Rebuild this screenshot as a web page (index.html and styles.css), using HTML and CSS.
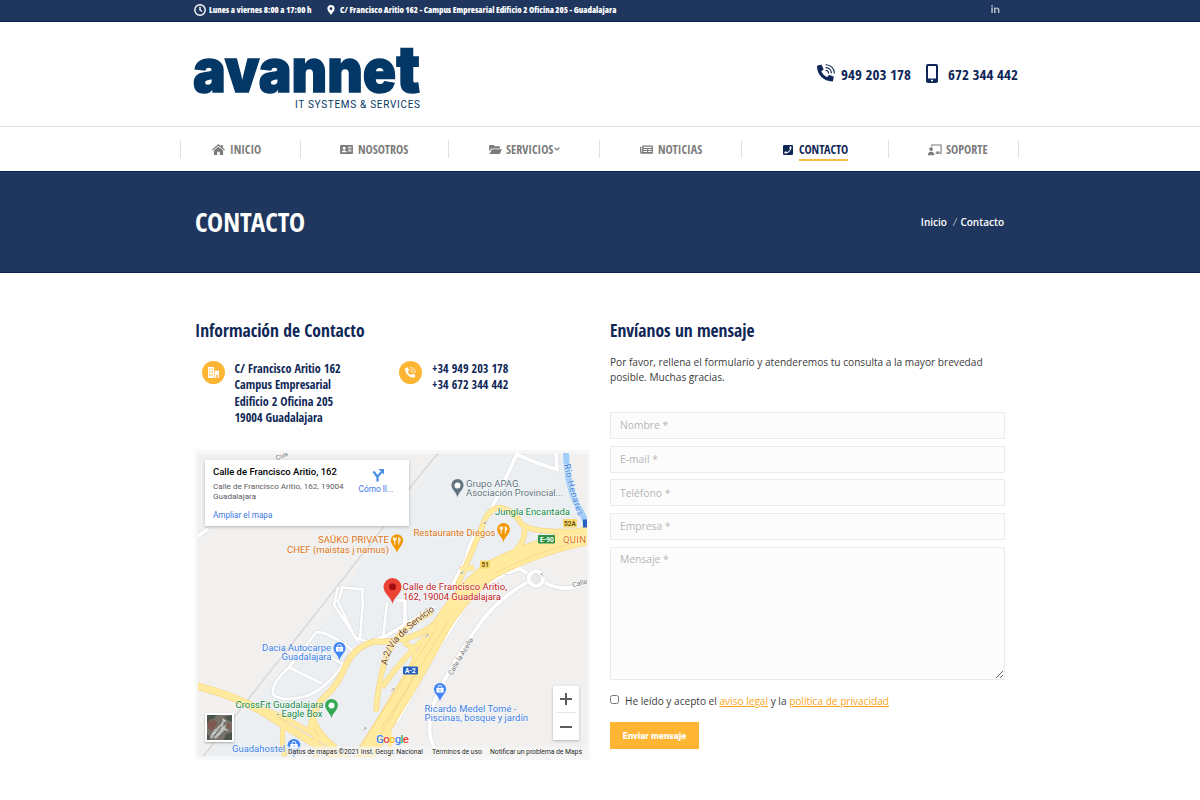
FILE: index.html
```html
<!DOCTYPE html>
<html lang="es">
<head>
<meta charset="utf-8">
<title>Contacto - Avannet</title>
<link rel="stylesheet" href="styles.css">
</head>
<body>
<svg class="defs" width="0" height="0">
  <symbol id="call" viewBox="0 0 512 512">
    <path transform="translate(0 22) scale(.93)" d="M497.39 361.8l-112-48a24 24 0 0 0-28 6.9l-49.6 60.6A370.66 370.66 0 0 1 130.6 204.11l60.6-49.6a23.94 23.94 0 0 0 6.9-28l-48-112A24.16 24.16 0 0 0 122.6.61l-104 24A24 24 0 0 0 0 48c0 256.5 207.9 464 464 464a24 24 0 0 0 23.400-18.600l24-104a24.290 24.290 0 0 0-14.010-27.600z"/>
    <path fill="none" stroke="currentColor" stroke-width="32" stroke-linecap="round" d="M256 20c130 0 236 106 236 236M256 104c84 0 152 68 152 152M256 186c39 0 70 31 70 70"/>
  </symbol>
  <symbol id="pin" viewBox="0 0 16 22"><path d="M8 22C7 16 1 13 1 7.500a7 7 0 0 1 14 0C15 13 9 16 8 22z"/></symbol>
  <symbol id="bag" viewBox="0 0 10 10"><path d="M1 4h8v5H1z" fill="#fff"/><path d="M3 4V3a2 2 0 0 1 4 0v1" fill="none" stroke="#fff"/><path d="M3.500 6q1.500 1.500 3 0" fill="none" stroke="#4285f4" stroke-width=".8"/></symbol>
  <symbol id="fork" viewBox="0 0 10 10"><path d="M2.500 1v8M1 1v3h3V1M7 9V1q2 1 1.500 4H7" fill="none" stroke="#fff" stroke-width="1.100"/></symbol>
</svg>

<div class="topbar">
  <svg class="i-clock" viewBox="0 0 12 12"><circle cx="6" cy="6" r="5.200"/><path d="M6 2.800V6l2.200 1.500"/></svg>
  <span class="hours">Lunes a viernes 8:00 a 17:00 h</span>
  <svg class="i-marker" viewBox="0 0 8 11"><path fill-rule="evenodd" d="M4 11C3 8.500 0 6.500 0 4a4 4 0 0 1 8 0c0 2.500-3 4.500-4 7zM4 2.500a1.500 1.500 0 1 0 0 3 1.500 1.500 0 0 0 0-3z"/></svg>
  <span class="address">C/ Francisco Aritio 162 - Campus Empresarial Edificio 2 Oficina 205 - Guadalajara</span>
  <svg class="i-linkedin" viewBox="0 0 9 8"><path d="M.3 2.600h1.500V8H.3zM.2.300h1.700v1.400H.2zM3 2.600h1.400v.7c.8-1.300 4-1.300 4 1.400V8H6.900V5c0-1.600-2.400-1.500-2.400 0v3H3z"/></svg>
</div>

<header class="header">
  <svg class="logo" viewBox="0 0 228 66" role="img">
    <text class="logo-name" x="-1" y="48" textLength="227" lengthAdjust="spacingAndGlyphs">avanne<tspan class="logo-t">t</tspan></text>
    <text class="logo-tag" x="101" y="64.300" textLength="125">IT SYSTEMS &amp; SERVICES</text>
  </svg>
  <div class="phones cond">
    <svg class="i-call"><use href="#call"/></svg><span class="tel-a">949 203 178</span>
    <svg class="i-mobile" viewBox="0 0 12 19"><path fill-rule="evenodd" d="M2 0h8a2 2 0 0 1 2 2v15a2 2 0 0 1-2 2H2a2 2 0 0 1-2-2V2a2 2 0 0 1 2-2zm0 2v12.500h8V2zm3 13.700v1.600h2v-1.600z"/></svg><span class="tel-b">672 344 442</span>
  </div>
</header>

<nav class="nav cond">
  <a class="home"><svg viewBox="0 0 14 12"><path d="M7 0l3 2.500V1h1.700v3L14 6l-.8 1L7 1.900.8 7 0 6z"/><path d="M7 3l5 4.200V12H8.400V8.500H5.600V12H2V7.200z"/></svg><span>INICIO</span></a>
  <a class="about"><svg viewBox="0 0 14 12"><path fill-rule="evenodd" d="M1 1h12a1 1 0 0 1 1 1v8a1 1 0 0 1-1 1H1a1 1 0 0 1-1-1V2a1 1 0 0 1 1-1zm3.500 2a1.600 1.600 0 1 0 0 3.200 1.600 1.600 0 0 0 0-3.200zM1.700 9h5.600Q7 6.800 4.500 6.800T1.700 9zM8.500 3v1h4V3zm0 2.100v1h4v-1zm0 2.100v1h4v-1z"/></svg><span>NOSOTROS</span></a>
  <a class="services"><svg viewBox="0 0 14 12"><path d="M0 8V2a1 1 0 0 1 1-1h4l1.300 1.500H11a1 1 0 0 1 1 1V5H3.200Q2.400 5 2 5.700z"/><path d="M3.200 5.700H14L12 10.400q-.3.600-1 .6H.5z"/></svg><span>SERVICIOS</span><svg class="chev" viewBox="0 0 6 4"><path d="M.6.700L3 3 5.400.700"/></svg></a>
  <a class="news"><svg viewBox="0 0 14 12"><path fill-rule="evenodd" d="M2.500 1.500H13a1 1 0 0 1 1 1v7a1 1 0 0 1-1 1H1.500A1.500 1.500 0 0 1 0 9V3h1.500v6h.8V2.500zM3.800 3v1.300h8.700V3zm0 2.500v1h3.800v-1zm0 2.200v1h3.800v-1zm5-2.200v1h3.700v-1zm0 2.200v1h3.700v-1z"/></svg><span>NOTICIAS</span></a>
  <a class="contact active"><svg viewBox="0 0 11 11"><rect width="11" height="11" rx="1.300"/><path fill="#fff" d="M7.700 1.500l1.700.4C9.400 6 6 9.400 1.900 9.400l-.4-1.700 2-.8.900 1Q7 6.800 7.900 4.400l-1-.9z"/></svg><span>CONTACTO</span></a>
  <a class="support"><svg viewBox="0 0 15 12"><path fill="none" stroke="currentColor" stroke-width="1.200" d="M4 2V.700h10v8.800H8"/><path d="M9 7.500h3v1.700H9z"/><circle cx="3.300" cy="5" r="2"/><path d="M0 11.500Q0 8 3.300 8t3.400 3.500z"/></svg><span>SOPORTE</span></a>
</nav>

<section class="hero">
  <h1 class="cond"><span>CONTACTO</span></h1>
  <p class="crumbs"><span>Inicio</span><i>/</i><span>Contacto</span></p>
</section>

<main class="main">
  <section class="info">
    <h2 class="cond"><span>Información de Contacto</span></h2>
    <div class="cards cond">
      <div class="badge"><svg viewBox="0 0 12 12"><path fill-rule="evenodd" d="M0 0h6.500v12H0zM1.200 1.500V3h1.400V1.500zm2.600 0V3h1.400V1.500zM1.200 4.700v1.500h1.400V4.700zm2.600 0v1.500h1.400V4.700zM1.200 8v1.500h1.400V8zM3.800 8v1.500h1.400V8zM7.200 4H12v8h-1.300V8.500H9V12H7.200z"/></svg></div>
      <p class="place">C/ Francisco Aritio 162<br>Campus Empresarial<br>Edificio 2 Oficina 205<br>19004 Guadalajara</p>
      <div class="badge"><svg><use href="#call"/></svg></div>
      <p class="numbers">+34 949 203 178<br>+34 672 344 442</p>
    </div>
    <div class="map">
      <svg class="map-art" viewBox="198 454 389 303">
        <defs>
          <path id="river" d="M564 465Q569 492 579 519"/>
          <path id="service" d="M387 666Q390 650 398 642Q415 624 438 609"/>
          <path id="acena" d="M452 676L474 639"/>
          <path id="main-road" d="M592 535Q535 547 492 570Q466 588 442 625Q418 670 396 705L362 762"/>
          <path id="west" d="M195 686Q235 696 262 712L340 760"/>
          <path id="west-b" d="M262 709Q300 722 352 762M285 757Q280 740 284 724M315 760Q320 740 309 726"/>
          <path id="loop" d="M310 733Q313 710 322 700Q336 688 343 672Q352 648 374 642Q400 644 424 632Q440 622 446 612M313 720Q318 735 335 748"/>
          <path id="ramps" d="M456 590Q470 556 483 525Q488 509 500 508Q514 511 521 524Q532 535 590 531M524 526Q528 546 503 561M460 570L474 568M376 712Q380 665 392 646Q400 630 432 612M430 634Q405 655 382 688M404 643Q420 650 412 668"/>
          <path id="white-roads" d="M518 452L489 515M480 530Q470 540 466 560L450 590M515 454Q534 463 557 470L556 452M500 577L517 567L527 574M534 556L520 564M545 583Q565 595 590 581M527 583Q500 598 483 620Q461 650 445 680Q425 715 431 741L440 760M520 569Q480 582 463 610Q440 645 420 680L397 722M198 537L208 529M405 628V601L397 601M370 643L385 637L435 607"/>
          <path id="lanes" d="M337 600L355 638L370 643M363 600L360 640M387 603L383 638M339 600L342 588L363 590L362 600M338 588L334 605L358 642M273 695Q271 684 288 669L316 633Q325 630 353 651Q325 695 300 698Q280 702 273 695M289 668L322 684M310 645L343 665"/>
        </defs>
        <path fill="#f1f0ef" d="M198 454h389v303H198z"/>
        <path fill="#eceff2" d="M383 528L445 454H564Q570 490 587 520V530L500 570L440 625L370 757H205L330 615z"/>
        <path fill="none" stroke="#d9dadb" stroke-width="1.800" d="M438 454Q405 492 383 528L323 605L203 757"/>
        <path fill="none" stroke="#9fcdf8" stroke-width="6" d="M566 452Q567 488 578 507T586 530"/>
        <g fill="none" stroke="#dcdee1"><use href="#white-roads" stroke-width="5"/><use href="#lanes" stroke-width="4"/><circle cx="536" cy="579" r="7.500" stroke-width="5"/></g>
        <g fill="none" stroke="#fff"><use href="#white-roads" stroke-width="3.700"/><use href="#lanes" stroke-width="2.600"/></g>
        <circle cx="536" cy="579" r="7.500" fill="#e9e9e9" stroke="#fff" stroke-width="3.700"/>
        <g fill="none" stroke="#f7d383">
          <use href="#west" stroke-width="7.500"/><use href="#west-b" stroke-width="5"/><use href="#loop" stroke-width="6"/><use href="#ramps" stroke-width="5.500"/><use href="#main-road" stroke-width="18.500"/>
        </g>
        <g fill="none" stroke="#ffea9e">
          <use href="#main-road" stroke-width="17.200"/><use href="#west" stroke-width="6.300"/><use href="#west-b" stroke-width="3.800"/><use href="#loop" stroke-width="4.800"/><use href="#ramps" stroke-width="4.300"/>
          <path d="M387 718Q391 735 390 760" stroke-width="4"/>
        </g>
        <path fill="none" stroke="#f7d383" stroke-width=".8" d="M583 541Q535 552 495 574M448 622Q420 668 375 745M436 630Q410 670 356 752M415 672Q408 690 380 730"/>
        <g class="arrows"><text x="483" y="524">↙</text><text x="460" y="574">↙</text><text x="424" y="638">↗</text><text x="538" y="535">←</text><text x="390" y="692">↗</text><text x="362" y="731">↗</text><text x="503" y="576">→</text><text x="540" y="577">↖</text></g>
        <text class="street" transform="translate(277 461) rotate(-25)">Cua</text>
        <text class="water"><textPath href="#river" textLength="54">Río Henares</textPath></text>
        <text class="road"><textPath href="#service" textLength="75">A-2/Vía de Servicio</textPath></text>
        <text class="street"><textPath href="#acena" textLength="42">Calle la Aceña</textPath></text>
        <text class="street" transform="translate(573 588) rotate(-15)">Calle</text>
        <rect x="480" y="561" width="10" height="8" fill="#f9d96d" rx="1"/><text class="shield dark" x="481.500" y="567.500">51</text>
        <rect x="563" y="519.500" width="14" height="8.500" fill="#f9d96d" rx="1"/><text class="shield dark" x="564" y="526.500">52A</text>
        <rect x="538" y="535.500" width="17" height="8.500" fill="#2f9147" rx="1"/><text class="shield" x="540" y="542.500">E-90</text>
        <rect x="403" y="667" width="15" height="8" fill="#285fbe" rx="1"/><text class="shield" x="405" y="673.700">A-2</text>
        <rect x="583" y="520" width="5" height="8" fill="#285fbe"/>

        <g fill="#62747f"><use href="#pin" x="450" y="479" width="15" height="19"/><text x="466" y="487.500" textLength="55">Grupo APAG.</text><text x="466" y="496.800" textLength="97">Asociación Provincial...</text></g><circle cx="457.500" cy="486" r="3" fill="#fff"/>
        <text fill="#188c48" x="495" y="515" textLength="75">Jungla Encantada</text>
        <g fill="#d97413"><text x="413.500" y="536.700" textLength="82">Restaurante Diegos</text><text x="318" y="543.700" textLength="71">SAÜKO PRIVATE</text><text x="287" y="553" textLength="102">CHEF (maistas į namus)</text><text x="563" y="543.200" textLength="23">QUIN</text></g>
        <g fill="#f29900"><use href="#pin" x="496" y="523" width="15" height="20"/><use href="#pin" x="390" y="534" width="14" height="20"/></g>
        <use href="#fork" x="499" y="526" width="9" height="9"/><use href="#fork" x="392.500" y="537" width="9" height="9"/>
        <path fill="#ea4335" d="M392.500 604.500C391.500 598 383.500 594 383.500 587.500a9 9 0 0 1 18 0C401.500 594 393.500 598 392.500 604.500z"/><circle cx="392.500" cy="587.300" r="3.500" fill="#a50e0e"/>
        <g fill="#c5221f"><text x="402.500" y="590.700" textLength="104.500">Calle de Francisco Aritio,</text><text x="403" y="600" textLength="98">162, 19004 Guadalajara</text></g>
        <g fill="#3b7fe8"><text x="262" y="651" textLength="69">Dacia Autocarpe</text><text x="281.500" y="660.300" textLength="50">Guadalajara</text><text x="424.500" y="712" textLength="92">Ricardo Medel Tomé -</text><text x="424.500" y="721.500" textLength="103.500">Piscinas, bosque y jardín</text><text x="232" y="752" textLength="53">Guadahostel</text></g>
        <g fill="#4285f4"><use href="#pin" x="332" y="642" width="15" height="19"/><use href="#pin" x="432.500" y="683" width="15" height="19"/><use href="#pin" x="286" y="739" width="16" height="20"/></g>
        <use href="#bag" x="335" y="644" width="9" height="9"/><use href="#bag" x="435.500" y="685" width="9" height="9"/><use href="#bag" x="289.500" y="741" width="9" height="9"/>
        <g fill="#188c48"><text x="235.500" y="708" textLength="88">CrossFit Guadalajara</text><text x="276.500" y="717.500" textLength="46">- Eagle Box</text></g>
        <use href="#pin" x="324" y="699" width="15" height="20" fill="#34a853"/><circle cx="331.500" cy="706" r="3" fill="#fff"/>
        <text class="google" x="376" y="743.800" textLength="33"><tspan fill="#4285f4">G</tspan><tspan fill="#ea4335">o</tspan><tspan fill="#fbbc05">o</tspan><tspan fill="#4285f4">g</tspan><tspan fill="#34a853">l</tspan><tspan fill="#ea4335">e</tspan></text>
        <path fill="#f5f5f5" opacity=".7" d="M288 747h299v10H288z"/>
        <g class="legal"><text x="288" y="754.300" textLength="135">Datos de mapas ©2021 Inst. Geogr. Nacional</text><text x="432" y="754.300" textLength="50">Términos de uso</text><text x="490" y="754.300" textLength="92">Notificar un problema de Maps</text></g>
      </svg>
      <div class="place-card">
        <div class="place-text"><b>Calle de Francisco Aritio, 162</b><span>Calle de Francisco Aritio, 162, 19004<br>Guadalajara</span><a>Ampliar el mapa</a></div>
        <div class="directions"><svg viewBox="0 0 14 14"><path fill="none" stroke="#4a90e2" stroke-width="2.200" d="M6.500 13.500V8.500L11 3.800M6.500 9L2.500 3.500"/><path fill="#4a90e2" d="M7.500 1H13v5.500z"/></svg><span>Cómo ll...</span></div>
      </div>
      <div class="satellite"><svg viewBox="0 0 26 26"><path fill="#77716a" d="M0 0h26v26H0z"/><path fill="#4a544b" d="M0 0h10l-3 4-4 1-3 4zM17 26l3-6 6-2v8zM18 2l8-2v7l-5-2zM0 20l3 2-1 4H0z"/><path fill="#80584f" d="M1 7l7-2 3 4-5 7-5-2zM18 10l6-1 1 6z"/><path stroke="#b4b6b5" stroke-width="3" d="M4 24l5-8 6-3 3-8M8 24l11-11" fill="none"/><path stroke="#dfe0de" stroke-width="1" d="M11 13l5-4M13 18l7-8M5 20l4-2M16 4l4 3M10 21l3-2M18 15l4 1" fill="none"/><path stroke="#555a55" stroke-width="1" d="M12 16l3-4M7 22l2-2M17 10l2-3" fill="none"/></svg></div>
      <div class="zoom"><span></span><span></span></div>
    </div>
  </section>

  <section class="message">
    <h2 class="cond"><span>Envíanos un mensaje</span></h2>
    <p class="intro">Por favor, rellena el formulario y atenderemos tu consulta a la mayor brevedad<br>posible. Muchas gracias.</p>
    <form class="form">
      <input placeholder="Nombre *"><input placeholder="E-mail *"><input placeholder="Teléfono *"><input placeholder="Empresa *">
      <textarea placeholder="Mensaje *"></textarea>
      <label><input type="checkbox"><span>He leído y acepto el <a>aviso legal</a> y la <a>política de privacidad</a></span></label>
      <button type="button">Enviar mensaje</button>
    </form>
  </section>
</main>
</body>
</html>
```
FILE: styles.css
```css
* { box-sizing: border-box; }
body { margin: 0; background: #fff; color: #3b3b3b; font: 11px/16px "Open Sans", sans-serif; width: 1200px; height: 800px; overflow: hidden; }
h1, h2, p { margin: 0; }
svg { display: block; flex: none; fill: currentColor; }
.defs { position: absolute; }
.cond { font-family: "Open Sans Condensed", "Open Sans", sans-serif; font-stretch: 75%; font-weight: 700; }
.cond span, .cond p { white-space: nowrap; }

.topbar { height: 22px; padding: 0 200px 2px 194px; display: flex; align-items: center; background: #1f375e; border-bottom: 1px solid #0b2350; color: #fff; font-size: 8.500px; font-weight: 800; font-stretch: 85%; white-space: nowrap; }
.i-clock { width: 12px; height: 12px; fill: none; stroke: #fff; stroke-width: 1.400; margin-right: 3px; }
.hours { width: 118px; letter-spacing: .02px; }
.i-marker { width: 8px; height: 10px; margin-right: 5px; }
.i-linkedin { width: 9px; height: 8px; margin: -2px 0 0 auto; color: #b4bdca; }

.header { height: 104px; padding: 22px 183px 0 194px; display: flex; justify-content: space-between; }
.logo { width: 228px; height: 66px; overflow: visible; color: #033766; }
.logo-name { font: 900 60px Inter, sans-serif; stroke: currentColor; stroke-width: 1.400; }
.logo-t { font-size: 65px; }
.logo-tag { font: 400 10px Roboto, sans-serif; }
.phones { display: flex; height: 60px; align-items: center; color: #0f2757; font-size: 15px; }
.i-call { width: 18px; height: 18px; margin: -3px 6px 0 0; }
.i-mobile { width: 12px; height: 19px; margin: -1px 10px 0 0; }
.tel-a { width: 85px; }
.tel-b { width: 69px; }

.nav { height: 45px; border-top: 1px solid #dfdfdf; display: grid; grid-template-columns: 120px 148px 151px 142px 147px 130px; padding-left: 180px; align-content: center; color: #7b7b7b; font-size: 12.100px; }
.nav a { height: 18px; border-left: 1px solid #e2e2e2; display: flex; align-items: center; gap: 5px; padding-top: 1px; }
.nav a:last-child { border-right: 1px solid #e2e2e2; width: 131px; }
.nav svg { width: 13px; height: 11px; }
.home { padding-left: 31px; }
.about { padding-left: 39px; }
.services { padding-left: 40px; }
.services span { margin-left: -1px; }
.news { padding-left: 40px; }
.contact { padding-left: 41px; }
.support { padding-left: 39px; }
.nav .contact svg { width: 10px; height: 10px; margin-right: 1px; }
.nav .support svg { width: 14px; height: 12px; margin-right: -1px; }
.nav .chev { width: 6px; height: 4px; margin: -2px 0 0 -4px; fill: none; stroke: currentColor; stroke-width: 1.200; }
.nav .active { color: #0f2757; }
.active span { height: 22px; padding-top: 3px; border-bottom: 2px solid #fdbb48; }

.hero { height: 102px; padding: 0 196px 0 195px; background: #1f375e; border: solid #0b2350; border-width: 1px 0; display: flex; align-items: center; justify-content: space-between; color: #fff; }
h1 { font-size: 27px; line-height: 36px; }
.crumbs { display: flex; font-size: 10px; font-weight: 550; }
.crumbs i { margin: 0 4px 0 6px; font-weight: 400; color: #aeb8c8; }

.main { padding: 46px 195px 0; display: grid; grid-template-columns: 395px 395px; column-gap: 20px; }
h2 { font-size: 17.500px; line-height: 24px; margin-top: -1px; color: #0f2757; }
.cards { margin-top: 19px; height: 88px; display: grid; grid-template-columns: 39.500px 157.500px 40px 1fr; color: #0f2757; font-size: 12.150px; line-height: 16.300px; }
.badge { width: 23px; height: 23px; margin-left: 7px; border-radius: 50%; background: #feb534; color: #fff; display: flex; align-items: center; justify-content: center; }
.badge svg { width: 11px; height: 11px; }

.map { position: relative; width: 395px; height: 310px; margin-top: 1px; border: 3px solid #f7f7f7; font-family: Roboto, sans-serif; }
.map-art { width: 389px; height: 304px; font: 9.500px Roboto, sans-serif; }
.map-art text { paint-order: stroke; stroke: rgba(255,255,255,.6); stroke-width: 1.200px; }
.map-art .street { font-size: 7px; fill: #777; }
.map-art .water { font-size: 9px; fill: #3d7edb; }
.map-art .road { font-size: 9.300px; fill: #70431f; }
.map-art .shield { font-size: 6.500px; font-weight: 700; fill: #fff; stroke: none; }
.map-art .dark { fill: #6c5013; }
.arrows { font-size: 6px; fill: #777; }
.map-art .google { font-size: 11.500px; font-weight: 500; }
.legal { font-size: 7px; fill: #222; }
.place-card { position: absolute; left: 7px; top: 7px; width: 204px; height: 66px; padding: 6px 12px 0 8px; display: flex; justify-content: space-between; background: #fff; box-shadow: 0 1px 3px rgba(0,0,0,.25); white-space: nowrap; }
.place-text { display: flex; flex-direction: column; font-size: 8.100px; line-height: 9.500px; color: #5b5b5b; }
.place-text b { font-size: 9.500px; font-weight: 500; line-height: 12px; color: #000; margin-bottom: 4px; }
.place-text a { margin-top: 9px; color: #3b78e7; line-height: 11px; font-size: 8.200px; }
.directions { width: 40px; display: flex; flex-direction: column; align-items: center; font-size: 8.300px; color: #3b78e7; margin-right: 1px; }
.directions svg { width: 14px; height: 14px; margin: 2px 0 0 4px; }
.directions span { line-height: 14px; }
.satellite { position: absolute; left: 7px; top: 260px; width: 29px; height: 29px; padding: 2px; background: #fff; box-shadow: 0 1px 2px rgba(0,0,0,.3); }
.satellite svg { width: 25px; height: 25px; }
.zoom { position: absolute; left: 355px; top: 233px; width: 26px; height: 54px; background: #fff; border-radius: 1px; box-shadow: 0 1px 3px rgba(0,0,0,.25); padding: 0 3px; }
.zoom span { display: grid; place-items: center; height: 27px; }
.zoom span:first-child { border-bottom: 1px solid #e6e6e6; }
.zoom span::before, .zoom span:first-child::after { content: ""; width: 12px; height: 2px; background: #5c5c5c; grid-area: 1 / 1; }
.zoom span:first-child::after { transform: rotate(90deg); }

.intro { margin: 13px 0 26px; line-height: 15.400px; font-size: 10.150px; white-space: nowrap; }
.form { display: flex; flex-direction: column; }
.form > input, textarea { width: 395px; height: 27px; margin: 0 0 6.700px; padding: 0 10px 0 9px; border: 1px solid #ebebeb; background: #fcfcfc; border-radius: 1px; font: 10.300px "Open Sans", sans-serif; outline: 0; }
::placeholder { color: #b6b6b6; opacity: 1; }
textarea { display: block; height: 133px; padding-top: 4px; margin-bottom: 13px; }
.form label { display: flex; align-items: center; height: 16px; font-size: 10.100px; white-space: nowrap; }
.form label input { width: 9px; height: 9px; margin: -2px 6px 0 0; }
.form label a { color: #f8a51b; text-decoration: underline; }
.form button { width: 89px; height: 27px; margin-top: 13px; padding: 0; border: 0; background: #feb534; color: #fff; font: 900 9.200px Roboto, sans-serif; }
```
